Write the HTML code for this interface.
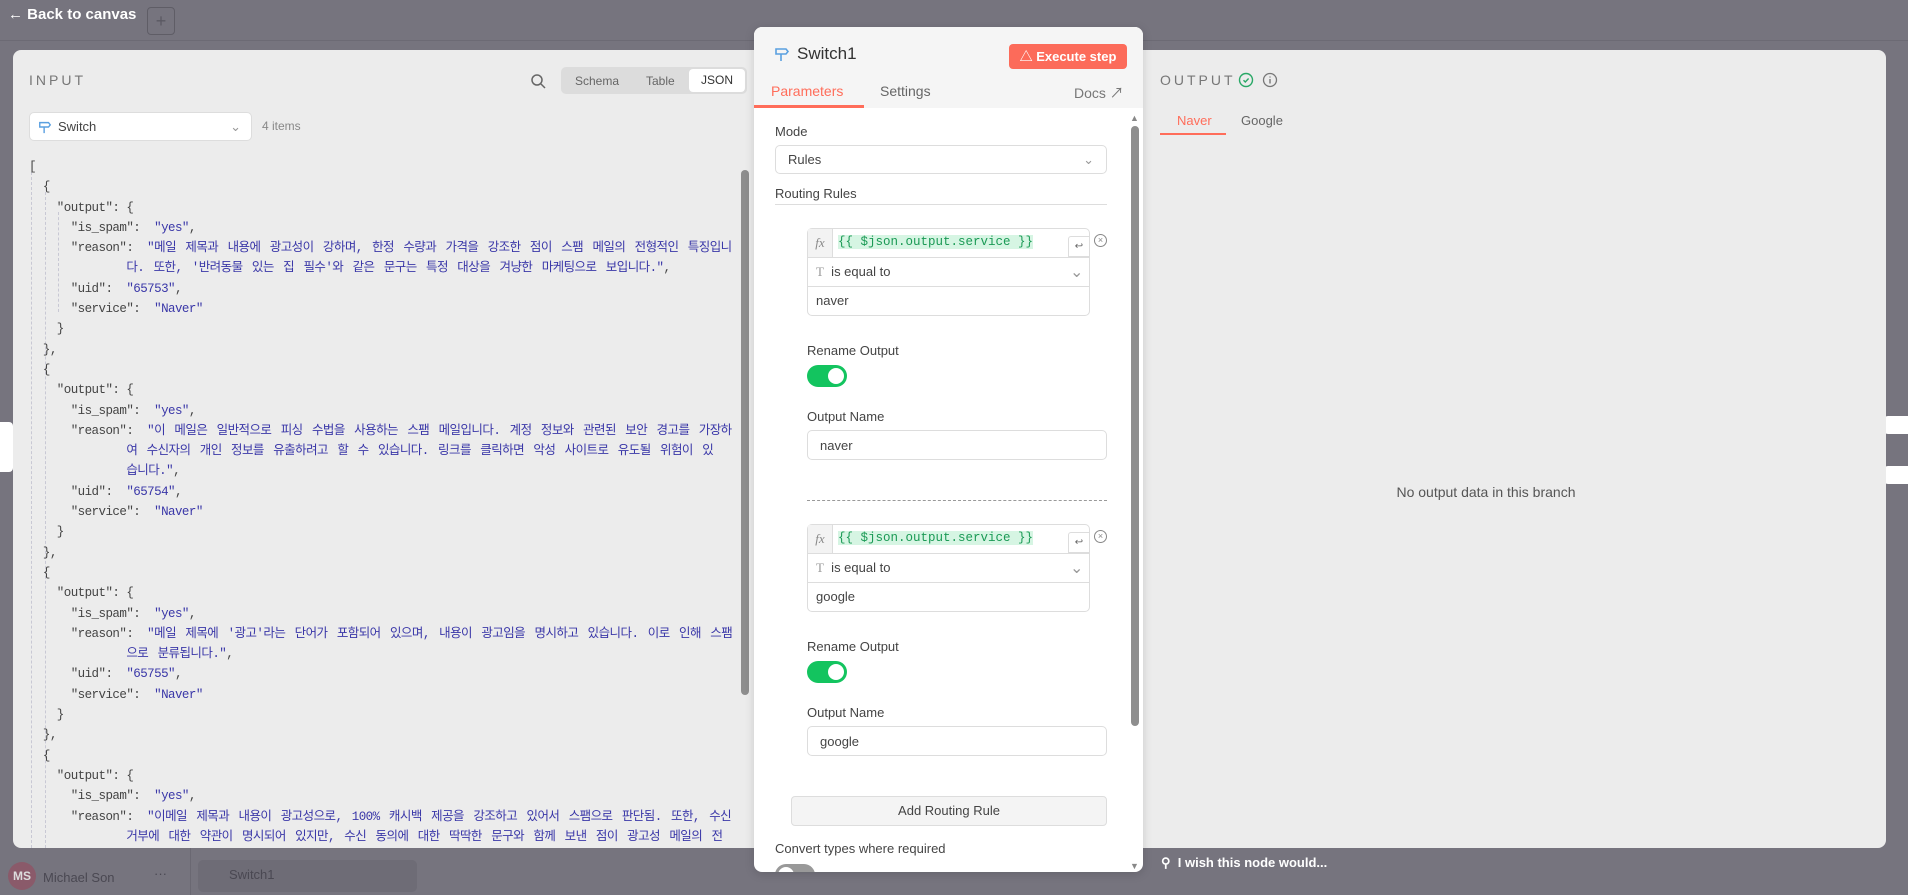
<!DOCTYPE html>
<html><head><meta charset="utf-8"><style>
*{box-sizing:border-box;margin:0;padding:0}
body{width:1908px;height:895px;overflow:hidden;background:#76747e;font-family:"Liberation Sans","Noto Sans CJK KR",sans-serif;position:relative;color:#444}
.a{position:absolute}
.panel{left:13px;top:50px;width:1873px;height:798px;background:#ececec;border-radius:8px}
.card{left:754px;top:27px;width:389px;height:845px;background:#fff;border-radius:8px;overflow:hidden;box-shadow:0 2px 10px rgba(0,0,0,.15)}
.mono{font-family:"Liberation Mono","Noto Sans CJK KR",monospace;font-size:12.5px;letter-spacing:-0.55px;white-space:pre;color:#444}
.s{color:#3a37a8}
.k{word-spacing:2.4px}
.lab{font-size:13px;color:#444}
.inp{border:1px solid #ddd;border-radius:5px;background:#fff;font-size:13px;color:#444;padding-left:12px;display:flex;align-items:center}
.tog{width:40px;height:22px;border-radius:11px;background:#13c45f}
.tog::after{content:"";position:absolute;right:3px;top:3px;width:16px;height:16px;border-radius:50%;background:#fff}
.rule{border:1px solid #ddd;border-radius:5px;background:#fff}
.expr{font-family:"Liberation Mono",monospace;font-size:12.5px;color:#1b9a55;background:#d6f5e3}
</style></head><body>
<div class="a" style="left:0;top:0;width:1908px;height:41px;border-bottom:1px solid #6c6a74"></div>
<div class="a" style="left:8px;top:6px;color:#fff;font-size:15px;font-weight:bold">&#8592; Back to canvas</div>
<div class="a" style="left:147px;top:7px;width:28px;height:28px;border:1px solid #5f5d66;border-radius:4px;color:#5a5862;text-align:center;line-height:26px;font-size:18px">+</div>
<div class="a" style="left:0;top:422px;width:13px;height:50px;background:#fff;border-radius:0 4px 4px 0"></div>
<div class="a" style="left:1884px;top:416px;width:24px;height:18px;background:#fff;border-radius:4px 0 0 4px"></div>
<div class="a" style="left:1884px;top:466px;width:24px;height:18px;background:#fff;border-radius:4px 0 0 4px"></div>
<div class="a" style="left:0;top:848px;width:1908px;height:47px;background:#76747e"></div>
<div class="a" style="left:190px;top:848px;width:1px;height:47px;background:#6a6872"></div>
<div class="a" style="left:8px;top:862px;width:28px;height:28px;border-radius:50%;background:#8a5a6a;color:#ddd;font-size:12px;font-weight:bold;text-align:center;line-height:28px">MS</div>
<div class="a" style="left:43px;top:870px;color:#4a4852;font-size:13px">Michael Son</div>
<div class="a" style="left:154px;top:866px;color:#4a4852;font-size:13px">···</div>
<div class="a" style="left:198px;top:860px;width:219px;height:32px;background:#6e6c76;border-radius:5px"></div>
<div class="a" style="left:229px;top:867px;color:#4a4852;font-size:13px">Switch1</div>
<div class="a" style="left:1161px;top:855px;color:#fff;font-size:13px;font-weight:bold">&#9906;&nbsp; I wish this node would...</div>

<div class="a panel"></div>
<div class="a" style="left:29px;top:72px;font-size:14px;letter-spacing:3px;color:#777">INPUT</div>
<svg class="a" style="left:530px;top:73px" width="16" height="16" viewBox="0 0 16 16"><circle cx="7" cy="7" r="5" fill="none" stroke="#666" stroke-width="1.5"/><path d="M11 11l4 4" stroke="#666" stroke-width="1.5"/></svg>
<div class="a" style="left:561px;top:67px;width:186px;height:27px;background:#dcdcdc;border-radius:5px"></div>
<div class="a" style="left:575px;top:74px;font-size:12px;color:#666">Schema</div>
<div class="a" style="left:646px;top:74px;font-size:12px;color:#666">Table</div>
<div class="a" style="left:689px;top:69px;width:56px;height:23px;background:#fff;border-radius:4px;font-size:12px;color:#333;text-align:center;line-height:23px">JSON</div>
<div class="a inp" style="left:29px;top:112px;width:223px;height:29px;padding-left:8px"><svg width="14" height="14" viewBox="0 0 16 16" style="margin-right:6px"><path d="M2 3h10l2 2.5-2 2.5H2z M7 8v7" fill="none" stroke="#5aa0e0" stroke-width="1.6"/></svg>Switch<span style="margin-left:auto;margin-right:10px;color:#999">&#8964;</span></div>
<div class="a" style="left:262px;top:119px;font-size:12px;color:#888">4 items</div>
<div class="a" style="left:31px;top:172px;width:1px;height:676px;border-left:1px dashed #c8c8d4"></div>
<div class="a" style="left:45px;top:192px;width:1px;height:656px;border-left:1px dashed #c8c8d4"></div>
<div class="a" style="left:58px;top:212px;width:1px;height:100px;border-left:1px dashed #c8c8d4"></div>
<div class="a" style="left:29px;top:157px;width:705px;height:691px;overflow:hidden">
<div class="mono" style="line-height:20.3px">[
  {
    "output": {
      "is_spam":  <span class="s">"yes"</span>,
      "reason":  <span class="s k">"메일 제목과 내용에 광고성이 강하며, 한정 수량과 가격을 강조한 점이 스팸 메일의 전형적인 특징입니</span>
              <span class="s k">다. 또한, '반려동물 있는 집 필수'와 같은 문구는 특정 대상을 겨냥한 마케팅으로 보입니다."</span>,
      "uid":  <span class="s">"65753"</span>,
      "service":  <span class="s">"Naver"</span>
    }
  },
  {
    "output": {
      "is_spam":  <span class="s">"yes"</span>,
      "reason":  <span class="s k">"이 메일은 일반적으로 피싱 수법을 사용하는 스팸 메일입니다. 계정 정보와 관련된 보안 경고를 가장하</span>
              <span class="s k">여 수신자의 개인 정보를 유출하려고 할 수 있습니다. 링크를 클릭하면 악성 사이트로 유도될 위험이 있</span>
              <span class="s k">습니다."</span>,
      "uid":  <span class="s">"65754"</span>,
      "service":  <span class="s">"Naver"</span>
    }
  },
  {
    "output": {
      "is_spam":  <span class="s">"yes"</span>,
      "reason":  <span class="s k">"메일 제목에 '광고'라는 단어가 포함되어 있으며, 내용이 광고임을 명시하고 있습니다. 이로 인해 스팸</span>
              <span class="s k">으로 분류됩니다."</span>,
      "uid":  <span class="s">"65755"</span>,
      "service":  <span class="s">"Naver"</span>
    }
  },
  {
    "output": {
      "is_spam":  <span class="s">"yes"</span>,
      "reason":  <span class="s k">"이메일 제목과 내용이 광고성으로, 100% 캐시백 제공을 강조하고 있어서 스팸으로 판단됨. 또한, 수신</span>
              <span class="s k">거부에 대한 약관이 명시되어 있지만, 수신 동의에 대한 딱딱한 문구와 함께 보낸 점이 광고성 메일의 전</span></div></div>
<div class="a" style="left:741px;top:170px;width:8px;height:525px;background:#8e8e8e;border-radius:4px"></div>

<div class="a" style="left:1160px;top:72px;font-size:14px;letter-spacing:3px;color:#777">OUTPUT</div>
<svg class="a" style="left:1238px;top:72px" width="16" height="16" viewBox="0 0 16 16"><circle cx="8" cy="8" r="6.5" fill="none" stroke="#29a866" stroke-width="1.4"/><path d="M5.5 8.2l1.8 1.8 3.3-3.5" fill="none" stroke="#29a866" stroke-width="1.4"/></svg>
<svg class="a" style="left:1262px;top:72px" width="16" height="16" viewBox="0 0 16 16"><circle cx="8" cy="8" r="6.5" fill="none" stroke="#777" stroke-width="1.3"/><path d="M8 7v4.5M8 4.5v1" stroke="#777" stroke-width="1.4"/></svg>
<div class="a" style="left:1177px;top:113px;font-size:13px;color:#ff6d5a">Naver</div>
<div class="a" style="left:1241px;top:113px;font-size:13px;color:#666">Google</div>
<div class="a" style="left:1160px;top:133px;width:66px;height:2px;background:#ff6d5a"></div>
<div class="a" style="left:1300px;top:484px;width:372px;text-align:center;font-size:14px;color:#555">No output data in this branch</div>

<div class="a card">
 <div class="a" style="left:0;top:0;width:389px;height:81px;background:#f5f5f5"></div>
 <svg class="a" style="left:20px;top:19px" width="16" height="16" viewBox="0 0 16 16"><path d="M2 3h10l2 2.5-2 2.5H2z M7 8v7" fill="none" stroke="#5aa0e0" stroke-width="1.6"/></svg>
 <div class="a" style="left:43px;top:17px;font-size:17px;color:#333">Switch1</div>
 <div class="a" style="left:255px;top:17px;width:118px;height:25px;background:#fc6b5a;border-radius:4px;color:#fff;font-size:13px;font-weight:bold;text-align:center;line-height:25px">&#9651; Execute step</div>
 <div class="a" style="left:17px;top:56px;font-size:14px;color:#ff6d5a">Parameters</div>
 <div class="a" style="left:126px;top:56px;font-size:14px;color:#666">Settings</div>
 <div class="a" style="left:320px;top:56px;font-size:14px;color:#777">Docs &#8599;</div>
 <div class="a" style="left:0;top:78px;width:110px;height:3px;background:#ff6d5a"></div>
 <div class="a" style="left:376px;top:86px;color:#888;font-size:9px">&#9650;</div>
 <div class="a" style="left:377px;top:99px;width:8px;height:600px;background:#8e8e8e;border-radius:4px"></div>
 <div class="a" style="left:376px;top:834px;color:#888;font-size:9px">&#9660;</div>
 <div class="a lab" style="left:21px;top:97px">Mode</div>
 <div class="a inp" style="left:21px;top:118px;width:332px;height:29px">Rules<span style="margin-left:auto;margin-right:12px;color:#999">&#8964;</span></div>
 <div class="a lab" style="left:21px;top:159px">Routing Rules</div>
 <div class="a" style="left:21px;top:177px;width:332px;height:1px;background:#ddd"></div>

 <div class="a rule" style="left:53px;top:201px;width:283px;height:88px">
  <div class="a" style="left:0;top:0;width:25px;height:28px;background:#f3f3f3;border-right:1px solid #ddd;font-family:'Liberation Serif',serif;font-style:italic;color:#888;font-size:13px;text-align:center;line-height:28px">fx</div>
  <div class="a expr" style="left:30px;top:6px">{{ $json.output.service }}</div>
  <div class="a" style="left:260px;top:7px;width:22px;height:21px;border:1px solid #ddd;border-radius:3px 0 0 0;font-size:10px;text-align:center;line-height:19px;color:#666">&#8617;</div>
  <div class="a" style="left:0;top:28px;width:281px;height:1px;background:#ddd"></div>
  <div class="a" style="left:8px;top:35px;font-size:13px"><span style="color:#999;font-family:'Liberation Serif',serif">T</span>&nbsp; is equal to</div>
  <div class="a" style="left:262px;top:33px;color:#999">&#8964;</div>
  <div class="a" style="left:0;top:57px;width:281px;height:1px;background:#ddd"></div>
  <div class="a" style="left:8px;top:64px;font-size:13px">naver</div>
 </div>
 <div class="a" style="left:340px;top:207px;width:13px;height:13px;border:1px solid #888;border-radius:50%;font-size:9px;text-align:center;line-height:11px;color:#888">×</div>
 <div class="a lab" style="left:53px;top:316px">Rename Output</div>
 <div class="a tog" style="left:53px;top:338px"></div>
 <div class="a lab" style="left:53px;top:382px">Output Name</div>
 <div class="a inp" style="left:53px;top:403px;width:300px;height:30px">naver</div>
 <div class="a" style="left:53px;top:473px;width:300px;border-top:1px dashed #999"></div>

 <div class="a rule" style="left:53px;top:497px;width:283px;height:88px">
  <div class="a" style="left:0;top:0;width:25px;height:28px;background:#f3f3f3;border-right:1px solid #ddd;font-family:'Liberation Serif',serif;font-style:italic;color:#888;font-size:13px;text-align:center;line-height:28px">fx</div>
  <div class="a expr" style="left:30px;top:6px">{{ $json.output.service }}</div>
  <div class="a" style="left:260px;top:7px;width:22px;height:21px;border:1px solid #ddd;border-radius:3px 0 0 0;font-size:10px;text-align:center;line-height:19px;color:#666">&#8617;</div>
  <div class="a" style="left:0;top:28px;width:281px;height:1px;background:#ddd"></div>
  <div class="a" style="left:8px;top:35px;font-size:13px"><span style="color:#999;font-family:'Liberation Serif',serif">T</span>&nbsp; is equal to</div>
  <div class="a" style="left:262px;top:33px;color:#999">&#8964;</div>
  <div class="a" style="left:0;top:57px;width:281px;height:1px;background:#ddd"></div>
  <div class="a" style="left:8px;top:64px;font-size:13px">google</div>
 </div>
 <div class="a" style="left:340px;top:503px;width:13px;height:13px;border:1px solid #888;border-radius:50%;font-size:9px;text-align:center;line-height:11px;color:#888">×</div>
 <div class="a lab" style="left:53px;top:612px">Rename Output</div>
 <div class="a tog" style="left:53px;top:634px"></div>
 <div class="a lab" style="left:53px;top:678px">Output Name</div>
 <div class="a inp" style="left:53px;top:699px;width:300px;height:30px">google</div>

 <div class="a" style="left:37px;top:769px;width:316px;height:30px;background:#f4f4f4;border:1px solid #ddd;border-radius:4px;text-align:center;line-height:28px;font-size:13px;color:#444">Add Routing Rule</div>
 <div class="a lab" style="left:21px;top:814px">Convert types where required</div>
 <div class="a" style="left:21px;top:837px;width:40px;height:22px;border-radius:11px;background:#999"></div>
 <div class="a" style="left:24px;top:840px;width:16px;height:16px;border-radius:50%;background:#fff"></div>
</div>
</body></html>
